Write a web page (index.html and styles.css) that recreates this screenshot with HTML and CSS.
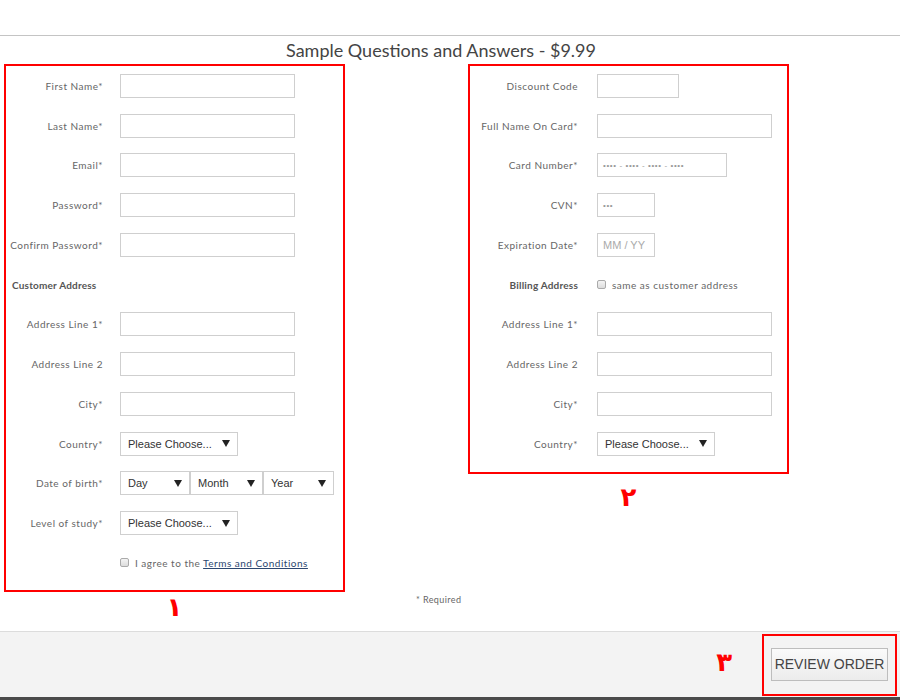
FILE: index.html
```html
<!DOCTYPE html>
<html>
<head>
<meta charset="utf-8">
<link rel="stylesheet" href="styles.css">
</head>
<body>
<div class="topbar"></div>
<h1 class="title">Sample Questions and Answers - $9.99</h1>
<main class="columns">
  <section class="col col-left">
    <div class="box box-left">
      <div class="row"><label class="lbl">First Name*</label><span class="input w174"></span></div>
      <div class="row"><label class="lbl">Last Name*</label><span class="input w174"></span></div>
      <div class="row"><label class="lbl">Email*</label><span class="input w174"></span></div>
      <div class="row"><label class="lbl">Password*</label><span class="input w174"></span></div>
      <div class="row"><label class="lbl">Confirm Password*</label><span class="input w174"></span></div>
      <div class="row"><span class="section">Customer Address</span></div>
      <div class="row"><label class="lbl">Address Line 1*</label><span class="input w174"></span></div>
      <div class="row"><label class="lbl">Address Line 2</label><span class="input w174"></span></div>
      <div class="row"><label class="lbl">City*</label><span class="input w174"></span></div>
      <div class="row"><label class="lbl">Country*</label><span class="select w118"><span class="sel-text">Please Choose...</span><span class="arrow"></span></span></div>
      <div class="row"><label class="lbl">Date of birth*</label>
        <div class="dob">
          <span class="select w70"><span class="sel-text">Day</span><span class="arrow"></span></span>
          <span class="select w72"><span class="sel-text">Month</span><span class="arrow"></span></span>
          <span class="select w71"><span class="sel-text">Year</span><span class="arrow"></span></span>
        </div>
      </div>
      <div class="row"><label class="lbl">Level of study*</label><span class="select w118"><span class="sel-text">Please Choose...</span><span class="arrow"></span></span></div>
      <div class="row"><span class="lbl"></span><span class="check"></span><span class="check-text">I agree to the <a class="link">Terms and Conditions</a></span></div>
    </div>
    <div class="num num-1">۱</div>
    <div class="required">* Required</div>
  </section>
  <section class="col col-right">
    <div class="box box-right">
      <div class="row"><label class="lbl">Discount Code</label><span class="input w82"></span></div>
      <div class="row"><label class="lbl">Full Name On Card*</label><span class="input w174"></span></div>
      <div class="row"><label class="lbl">Card Number*</label><span class="input w130"><span class="ph dots">•••• - •••• - •••• - ••••</span></span></div>
      <div class="row"><label class="lbl">CVN*</label><span class="input w58"><span class="ph dots">•••</span></span></div>
      <div class="row"><label class="lbl">Expiration Date*</label><span class="input w58"><span class="ph">MM / YY</span></span></div>
      <div class="row"><label class="lbl bold">Billing Address</label><span class="check"></span><span class="check-text">same as customer address</span></div>
      <div class="row"><label class="lbl">Address Line 1*</label><span class="input w174"></span></div>
      <div class="row"><label class="lbl">Address Line 2</label><span class="input w174"></span></div>
      <div class="row"><label class="lbl">City*</label><span class="input w174"></span></div>
      <div class="row"><label class="lbl">Country*</label><span class="select w118"><span class="sel-text">Please Choose...</span><span class="arrow"></span></span></div>
    </div>
    <div class="num num-2">۲</div>
  </section>
</main>
<footer class="footer">
  <span class="num num-3">۳</span>
  <div class="btn-frame"><button class="btn">REVIEW ORDER</button></div>
</footer>
<div class="bottombar"></div>
</body>
</html>
```
FILE: styles.css
```css
* { box-sizing: border-box; }
html, body { margin: 0; padding: 0; background: #fff; }
body {
  width: 900px;
  height: 700px;
  overflow: hidden;
  font-family: Lato, "Open Sans", sans-serif;
  color: #666;
  position: relative;
}
.topbar {
  height: 36px;
  border-bottom: 1px solid #c4c4c4;
}
.title {
  margin: 0;
  height: 28px;
  line-height: 28px;
  text-align: center;
  font-size: 18px;
  font-weight: normal;
  color: #444;
  padding-right: 18px;
}
.columns {
  display: flex;
  height: 567px;
}
.col { display: flex; flex-direction: column; }
.col-left { margin-left: 4px; width: 341px; position: relative; }
.col-right { margin-left: 123px; width: 321px; }
.box {
  border: 2px solid #f00;
  display: flex;
  flex-direction: column;
}
.box-left { padding: 0 0 7px 0; }
.box-right { padding: 0 0 8px 0; }
.row {
  height: 39.75px;
  display: flex;
  align-items: center;
}
.lbl {
  flex: none;
  text-align: right;
  font-size: 10px;
  letter-spacing: 0.5px;
  color: #666;
  margin-right: 17px;
}
.box-left .lbl { width: 97px; }
.box-right .lbl { width: 108px; margin-right: 19px; }
.bold { font-weight: bold; color: #555; letter-spacing: 0.2px; }
.section {
  padding-left: 6px;
  font-size: 10px;
  font-weight: bold;
  color: #555;
  letter-spacing: 0.2px;
}
.input {
  display: flex;
  align-items: center;
  height: 24px;
  border: 1px solid #cfcfcf;
  background: #fff;
  padding-left: 5px;
}
.w174 { width: 175px; }
.w130 { width: 130px; }
.w82 { width: 82px; }
.w58 { width: 58px; }
.ph {
  font-family: "Liberation Sans", Arial, sans-serif;
  font-size: 11px;
  color: #aaa;
  padding-left: 0;
}
.dots { font-size: 8px; letter-spacing: 0.6px; color: #999; }
.select {
  height: 24px;
  border: 1px solid #cfcfcf;
  background: #fff;
  display: flex;
  align-items: center;
  justify-content: space-between;
  padding: 0 7px 0 7px;
}
.w118 { width: 118px; }
.w70 { width: 70px; }
.w72 { width: 73px; }
.w71 { width: 71px; }
.sel-text {
  font-family: "Liberation Sans", Arial, sans-serif;
  font-size: 11px;
  color: #333;
}
.arrow {
  width: 0;
  height: 0;
  border-left: 4px solid transparent;
  border-right: 4px solid transparent;
  border-top: 7px solid #222;
}
.dob { display: flex; }
.check {
  flex: none;
  width: 9px;
  height: 9px;
  border: 1px solid #aaa;
  border-radius: 2px;
  background: linear-gradient(#f4f4f4, #dcdcdc);
  margin-right: 6px;
}
.check-text {
  font-size: 10px;
  letter-spacing: 0.5px;
  color: #666;
}
.link {
  color: #2c4770;
  text-decoration: underline;
}
.num {
  font-family: "DejaVu Sans", sans-serif;
  font-weight: bold;
  color: #f00;
  font-size: 26px;
  line-height: 26px;
  text-align: center;
}
.num-1 { margin-top: 2px; }
.num-2 { margin-top: 10px; }
.required {
  position: absolute;
  left: 412px;
  top: 530px;
  font-size: 9px;
  letter-spacing: 0.4px;
  color: #666;
  white-space: nowrap;
}
.footer {
  height: 66px;
  background: #f3f3f3;
  border-top: 1px solid #dcdcdc;
  display: flex;
  align-items: center;
  justify-content: flex-end;
  padding-right: 3px;
}
.num-3 { margin-right: 30px; margin-top: -6px; }
.btn-frame {
  border: 2px solid #f00;
  height: 62px;
  width: 135px;
  display: flex;
  align-items: center;
  justify-content: center;
  margin-top: 1px;
}
.btn {
  width: 117px;
  height: 33px;
  border: 1px solid #bdbdbd;
  background: linear-gradient(#fafafa, #ececec);
  font-family: "Liberation Sans", Arial, sans-serif;
  font-size: 14px;
  color: #444;
  padding: 0;
  margin-top: -2px;
}
.bottombar {
  height: 3px;
  background: #4a4a4a;
}
```
